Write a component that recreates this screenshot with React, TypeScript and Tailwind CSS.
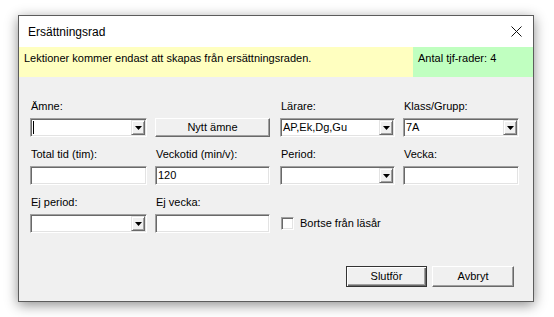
import React from "react";

const sunken =
  "border border-t-[#a0a0a0] border-l-[#a0a0a0] border-r-white border-b-white shadow-[inset_1px_1px_0_#696969,inset_-1px_-1px_0_#e3e3e3] bg-white";

const Label = ({ text }: { text: string }) => (
  <div className="h-[13px] leading-[13px] pl-[1px] text-[11px] text-black">{text}</div>
);

const Field = ({ w, value }: { w: string; value?: string }) => (
  <div className={`${w} h-[19px] mt-[5px] ${sunken} flex items-center pl-[2px] text-[11px]`}>
    {value}
  </div>
);

const Combo = ({ w, value, caret }: { w: string; value?: string; caret?: boolean }) => (
  <div className={`${w} h-[19px] mt-[5px] ${sunken} flex items-stretch p-[1px]`}>
    <div className="flex-1 flex items-center pl-[1px] text-[11px]">
      {caret && <div className="w-[1px] h-[13px] bg-black" />}
      {value}
    </div>
    <div className="w-[14px] bg-[#f0f0f0] border border-t-[#e3e3e3] border-l-[#e3e3e3] border-r-[#696969] border-b-[#696969] shadow-[inset_1px_1px_0_#fff,inset_-1px_-1px_0_#a0a0a0] flex items-center justify-center">
      <svg width="7" height="4" viewBox="0 0 7 4">
        <polygon points="0,0 7,0 3.5,4" fill="#000" />
      </svg>
    </div>
  </div>
);

const Button = ({ w, text, def }: { w: string; text: string; def?: boolean }) => (
  <div
    className={`${w} flex items-center justify-center text-[11px] bg-[#f0f0f0] ${
      def
        ? "border border-[#333] shadow-[inset_1px_1px_0_#fff,inset_-1px_-1px_0_#696969,inset_-2px_-2px_0_#a0a0a0]"
        : "border border-t-white border-l-white border-r-[#696969] border-b-[#696969] shadow-[inset_-1px_-1px_0_#a0a0a0]"
    }`}
  >
    {text}
  </div>
);

export default function App() {
  return (
    <div className="w-[554px] h-[317px] bg-white overflow-hidden pl-[18px] pt-[15px] font-['Liberation_Sans',Arial,sans-serif] text-black">
      <div className="w-[516px] h-[287px] border border-[#5c5c5c] flex flex-col shadow-[0_3px_12px_rgba(0,0,0,0.45)]">
        {/* title bar */}
        <div className="h-[31px] bg-white flex items-center justify-between pl-[9px] pr-[11px]">
          <span className="text-[12px]">Ersättningsrad</span>
          <svg width="11" height="11" viewBox="0 0 11 11">
            <path d="M0.5 0.5L10.5 10.5M10.5 0.5L0.5 10.5" stroke="#111" strokeWidth="1" />
          </svg>
        </div>

        {/* info banner */}
        <div className="h-[30px] flex text-[11px] leading-[14px]">
          <div className="flex-1 bg-[#ffffc0] pl-[5px] pt-[4px]">
            Lektioner kommer endast att skapas från ersättningsraden.
          </div>
          <div className="w-[120px] bg-[#c0ffc0] pl-[5px] pt-[4px]">Antal tjf-rader: 4</div>
        </div>

        {/* form */}
        <div className="flex-1 bg-[#f0f0f0] flex flex-col pl-[11px] pt-[23px] pb-[14px] pr-[19px]">
          <div className="grid grid-cols-[125px_125px_123px_116px] gap-y-[11px]">
            <div>
              <Label text="Ämne:" />
              <Combo w="w-[117px]" caret />
            </div>
            <div className="flex items-end">
              <Button w="w-[115px] h-[19px]" text="Nytt ämne" />
            </div>
            <div>
              <Label text="Lärare:" />
              <Combo w="w-[115px]" value="AP,Ek,Dg,Gu" />
            </div>
            <div>
              <Label text="Klass/Grupp:" />
              <Combo w="w-[116px]" value="7A" />
            </div>

            <div>
              <Label text="Total tid (tim):" />
              <Field w="w-[117px]" />
            </div>
            <div>
              <Label text="Veckotid (min/v):" />
              <Field w="w-[115px]" value="120" />
            </div>
            <div>
              <Label text="Period:" />
              <Combo w="w-[115px]" />
            </div>
            <div>
              <Label text="Vecka:" />
              <Field w="w-[116px]" />
            </div>

            <div>
              <Label text="Ej period:" />
              <Combo w="w-[117px]" />
            </div>
            <div>
              <Label text="Ej vecka:" />
              <Field w="w-[115px]" />
            </div>
            <div className="col-span-2 flex items-end">
              <div className="h-[19px] mt-[5px] flex items-center gap-[6px] pl-[1px] text-[11px]">
                <div className={`w-[13px] h-[13px] ${sunken}`} />
                <span>Bortse från läsår</span>
              </div>
            </div>
          </div>

          <div className="mt-auto flex justify-end gap-[5px]">
            <Button w="w-[81px] h-[21px]" text="Slutför" def />
            <Button w="w-[82px] h-[21px]" text="Avbryt" />
          </div>
        </div>
      </div>
    </div>
  );
}
